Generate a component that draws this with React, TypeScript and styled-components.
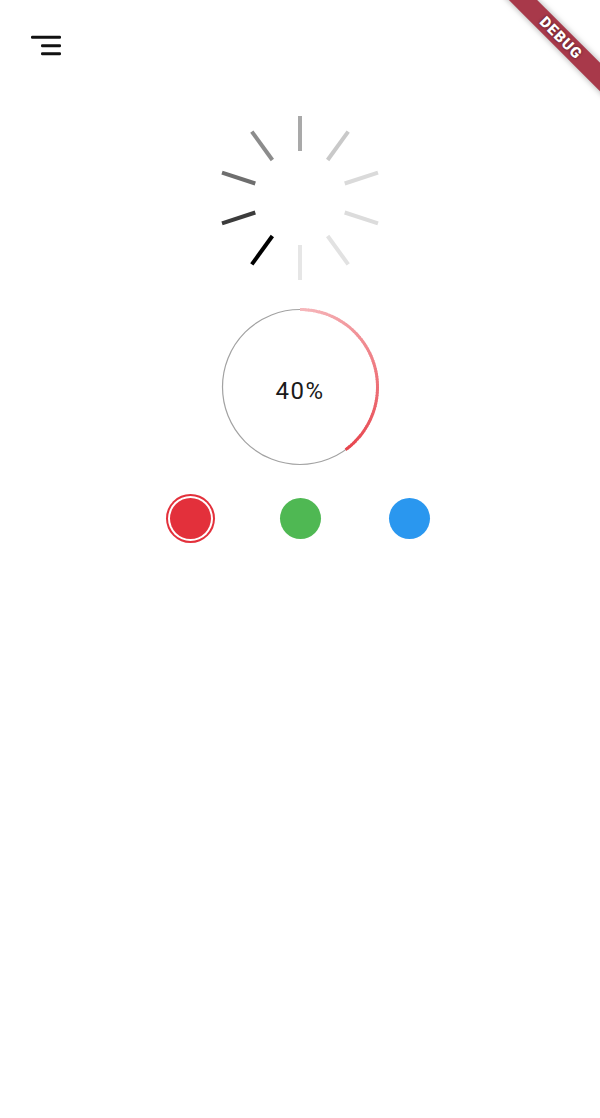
import React from "react";
import styled, { createGlobalStyle } from "styled-components";

const GlobalStyle = createGlobalStyle`
  html, body {
    margin: 0;
    padding: 0;
    background: #ffffff;
  }
  body {
    font-family: Roboto, "Noto Sans", sans-serif;
  }
`;

const Page = styled.div`
  position: relative;
  width: 600px;
  height: 1118px;
  overflow: hidden;
  background: #ffffff;
`;

const Header = styled.header`
  box-sizing: border-box;
  height: 113px;
  padding: 26px 0 0 26px;
`;

const MenuButton = styled.button`
  display: block;
  width: 40px;
  height: 40px;
  padding: 0;
  border: 0;
  background: transparent;
  cursor: pointer;
`;

const Content = styled.main`
  display: flex;
  flex-direction: column;
  align-items: center;
`;

const SpinnerSvg = styled.svg`
  display: block;
  width: 170px;
  height: 170px;
`;

const ProgressWrap = styled.div`
  position: relative;
  margin-top: 24px;
  width: 160px;
  height: 160px;
  display: flex;
  align-items: center;
  justify-content: center;
`;

const ProgressSvg = styled.svg`
  position: absolute;
  inset: 0;
  width: 160px;
  height: 160px;
`;

const ProgressLabel = styled.span`
  position: relative;
  margin-top: 7px;
  font-family: Roboto, "Noto Sans", sans-serif;
  font-size: 24px;
  letter-spacing: 1.5px;
  color: #1a1a1a;
`;

const DotsRow = styled.div`
  margin-top: 26px;
  display: flex;
  gap: 59.5px;
`;

const DotSlot = styled.div`
  width: 50px;
  height: 50px;
  display: flex;
  align-items: center;
  justify-content: center;
`;

const Dot = styled.div<{ $color: string; $selected?: boolean }>`
  width: 41px;
  height: 41px;
  border-radius: 50%;
  background: ${(p) => p.$color};
  box-shadow: ${(p) =>
    p.$selected ? `0 0 0 2px #ffffff, 0 0 0 4px ${p.$color}` : "none"};
`;

const BannerCorner = styled.div`
  position: absolute;
  top: 0;
  right: 0;
  width: 100px;
  height: 100px;
  overflow: hidden;
  pointer-events: none;
`;

const BannerBand = styled.div`
  position: absolute;
  left: -19px;
  top: 28px;
  width: 160px;
  height: 20px;
  background: #a8394a;
  transform: rotate(45deg);
  box-shadow: 0 0 6px rgba(0, 0, 0, 0.35);
  display: flex;
  align-items: center;
  justify-content: center;
`;

const BannerText = styled.span`
  font-family: Roboto, "DejaVu Sans", sans-serif;
  font-weight: 900;
  font-size: 15px;
  letter-spacing: 1px;
  color: #ffffff;
  text-shadow: 0 0 3px rgba(0, 0, 0, 0.6);
  line-height: 1;
`;

const tickColors = [
  "#a9a9a9",
  "#c9c9c9",
  "#dadada",
  "#dcdcdc",
  "#e2e2e2",
  "#e6e6e6",
  "#000000",
  "#3c3c3c",
  "#6e6e6e",
  "#8c8c8c",
];

function Spinner() {
  const c = 85;
  return (
    <SpinnerSvg viewBox="0 0 170 170">
      {tickColors.map((col, i) => (
        <line
          key={i}
          x1={c}
          y1={c - 82}
          x2={c}
          y2={c - 47}
          stroke={col}
          strokeWidth={4}
          transform={`rotate(${i * 36} ${c} ${c})`}
        />
      ))}
    </SpinnerSvg>
  );
}

function polar(cx: number, cy: number, r: number, deg: number) {
  const a = ((deg - 90) * Math.PI) / 180;
  return [cx + r * Math.cos(a), cy + r * Math.sin(a)];
}

function mix(a: number[], b: number[], t: number) {
  return a.map((v, i) => Math.round(v + (b[i] - v) * t));
}

function CircularProgress({ value }: { value: number }) {
  const cx = 80;
  const cy = 80;
  const r = 77.5;
  const total = 360 * value;
  const steps = 72;
  const start = [246, 184, 188];
  const end = [231, 68, 77];
  const segs = [];
  for (let i = 0; i < steps; i++) {
    const a0 = (total * i) / steps;
    const a1 = Math.min(total, (total * (i + 1)) / steps + 0.6);
    const [x0, y0] = polar(cx, cy, r, a0);
    const [x1, y1] = polar(cx, cy, r, a1);
    const col = mix(start, end, i / (steps - 1));
    segs.push(
      <path
        key={i}
        d={`M ${x0} ${y0} A ${r} ${r} 0 0 1 ${x1} ${y1}`}
        stroke={`rgb(${col[0]},${col[1]},${col[2]})`}
        strokeWidth={3}
        fill="none"
      />
    );
  }
  return (
    <ProgressWrap>
      <ProgressSvg viewBox="0 0 160 160">
        <circle cx={cx} cy={cy} r={r} stroke="#a2a2a2" strokeWidth={1.2} fill="none" />
        {segs}
      </ProgressSvg>
      <ProgressLabel>{Math.round(value * 100)}%</ProgressLabel>
    </ProgressWrap>
  );
}

function MenuIcon() {
  return (
    <svg width="40" height="40" viewBox="0 0 40 40">
      <rect x="5" y="9.8" width="30" height="3" rx="1.2" fill="#111" />
      <rect x="15" y="18.2" width="20" height="3" rx="1.2" fill="#111" />
      <rect x="15" y="26.2" width="20" height="3" rx="1.2" fill="#111" />
    </svg>
  );
}

const colors = [
  { c: "#e3303b", selected: true },
  { c: "#4fb853" },
  { c: "#2a97ef" },
];

export default function App() {
  return (
    <>
      <GlobalStyle />
      <Page>
        <Header>
          <MenuButton aria-label="menu">
            <MenuIcon />
          </MenuButton>
        </Header>
        <Content>
          <Spinner />
          <CircularProgress value={0.4} />
          <DotsRow>
            {colors.map((d, i) => (
              <DotSlot key={i}>
                <Dot $color={d.c} $selected={d.selected} />
              </DotSlot>
            ))}
          </DotsRow>
        </Content>
        <BannerCorner>
          <BannerBand>
            <BannerText>DEBUG</BannerText>
          </BannerBand>
        </BannerCorner>
      </Page>
    </>
  );
}
